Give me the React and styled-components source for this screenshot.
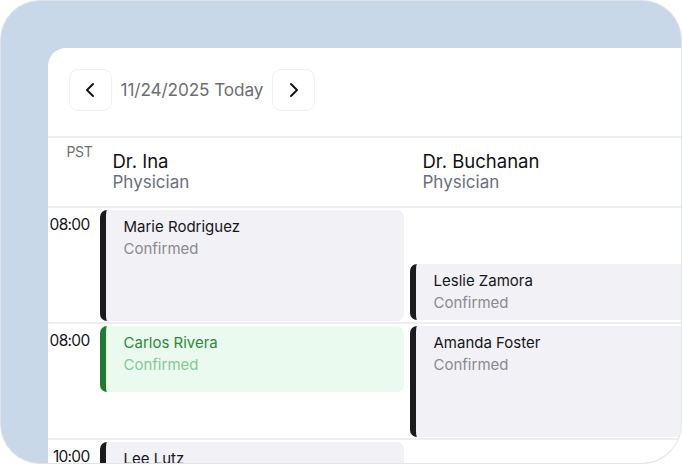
import React from 'react';
import styled, { createGlobalStyle } from 'styled-components';
import { ChevronLeft, ChevronRight } from 'lucide-react';

const HOUR = 116;

const doctors = [
    { name: 'Dr. Ina', role: 'Physician' },
    { name: 'Dr. Buchanan', role: 'Physician' },
];

const hours = [
    {
        label: '08:00',
        events: [
            [{ name: 'Marie Rodriguez', status: 'Confirmed', start: 0, length: 60 }],
            [{ name: 'Leslie Zamora', status: 'Confirmed', start: 28, length: 32 }],
        ],
    },
    {
        label: '08:00',
        events: [
            [{ name: 'Carlos Rivera', status: 'Confirmed', start: 0, length: 37, tone: 'green' }],
            [{ name: 'Amanda Foster', status: 'Confirmed', start: 0, length: 60 }],
        ],
    },
    {
        label: '10:00',
        events: [
            [{ name: 'Lee Lutz', status: 'Confirmed', start: 0, length: 60 }],
            [],
        ],
    },
];

const App = () => {
    return (
        <>
        <GlobalStyle />
        <Frame>
            <Panel>
                <Toolbar>
                    <NavButton aria-label="Previous day">
                        <ChevronLeft size={24} strokeWidth={2} />
                    </NavButton>
                    <DateLabel>11/24/2025 Today</DateLabel>
                    <NavButton aria-label="Next day">
                        <ChevronRight size={24} strokeWidth={2} />
                    </NavButton>
                </Toolbar>

                <HeaderRow>
                    <Zone>PST</Zone>
                    {doctors.map((d) => (
                        <DoctorHead key={d.name}>
                            <DoctorName>{d.name}</DoctorName>
                            <DoctorRole>{d.role}</DoctorRole>
                        </DoctorHead>
                    ))}
                </HeaderRow>

                {hours.map((h, i) => (
                    <HourRow key={i}>
                        <TimeLabel>{h.label}</TimeLabel>
                        {h.events.map((list, c) => (
                            <Slot key={c}>
                                {list.map((e) => (
                                    <EventCard
                                        key={e.name}
                                        $tone={e.tone}
                                        style={{
                                            top: 2 + (e.start / 60) * HOUR,
                                            height: (e.length / 60) * HOUR - 5,
                                        }}
                                    >
                                        <EventName $tone={e.tone}>{e.name}</EventName>
                                        <EventStatus $tone={e.tone}>{e.status}</EventStatus>
                                    </EventCard>
                                ))}
                            </Slot>
                        ))}
                    </HourRow>
                ))}
            </Panel>
        </Frame>
        </>
    );
}

export default App;


const GlobalStyle = createGlobalStyle`
    html, body {
        margin: 0;
        padding: 0;
        background: #ffffff;
    }
    body {
        font-family: Inter, "Noto Sans", sans-serif;
        -webkit-font-smoothing: antialiased;
    }
    * {
        box-sizing: border-box;
    }
`

const Frame = styled.div`
    width: 682px;
    height: 464px;
    background: #c9d8e8;
    border: 1.5px solid #e3e4e9;
    border-radius: 40px;
    overflow: hidden;
    padding: 46.5px 0 0 46.5px;
`

const Panel = styled.div`
    width: 700px;
    min-height: 500px;
    background: #ffffff;
    border-top-left-radius: 18px;
    overflow: hidden;
`

const Toolbar = styled.div`
    display: flex;
    align-items: center;
    height: 90px;
    padding: 0 0 4px 21px;
    gap: 9px;
    border-bottom: 2px solid #eeeef2;
`

const NavButton = styled.button`
    width: 43px;
    height: 42px;
    display: flex;
    align-items: center;
    justify-content: center;
    padding: 0;
    background: #ffffff;
    border: 1px solid #f1f1f4;
    border-radius: 9px;
    color: #151517;
`

const DateLabel = styled.span`
    font-size: 17.2px;
    color: #6e6e72;
    letter-spacing: -0.1px;
`

const HeaderRow = styled.div`
    display: grid;
    grid-template-columns: 52px 310px 310px;
    height: 70px;
    border-bottom: 2px solid #eeeef2;
`

const Zone = styled.div`
    font-size: 14px;
    color: #707075;
    text-align: right;
    padding: 5px 7px 0 0;
    letter-spacing: -0.3px;
`

const DoctorHead = styled.div`
    display: flex;
    flex-direction: column;
    padding: 12px 0 0 13px;
`

const DoctorName = styled.div`
    font-size: 18.5px;
    line-height: 22px;
    color: #111113;
`

const DoctorRole = styled.div`
    font-size: 17px;
    line-height: 20px;
    color: #6b6f7c;
`

const HourRow = styled.div`
    display: grid;
    grid-template-columns: 52px 310px 310px;
    height: ${HOUR}px;
    border-bottom: 2px solid #eeeef2;
`

const TimeLabel = styled.div`
    font-size: 15.5px;
    line-height: 16px;
    color: #141416;
    text-align: right;
    padding: 9px 10px 0 0;
    letter-spacing: -0.7px;
    white-space: nowrap;
`

const Slot = styled.div`
    position: relative;
`

const EventCard = styled.div`
    position: absolute;
    left: 0;
    right: 6px;
    display: flex;
    flex-direction: column;
    padding: 6px 0 0 18px;
    border-radius: 7px;
    border-left: 6px solid ${(p) => (p.$tone === 'green' ? '#1f7c2f' : '#1b1b1e')};
    background: ${(p) => (p.$tone === 'green' ? '#eafaef' : '#f1f1f6')};
`

const EventName = styled.div`
    font-size: 15px;
    line-height: 22px;
    color: ${(p) => (p.$tone === 'green' ? '#2b8a3c' : '#161618')};
`

const EventStatus = styled.div`
    font-size: 15px;
    line-height: 22px;
    color: ${(p) => (p.$tone === 'green' ? '#86c995' : '#8a8a90')};
`
